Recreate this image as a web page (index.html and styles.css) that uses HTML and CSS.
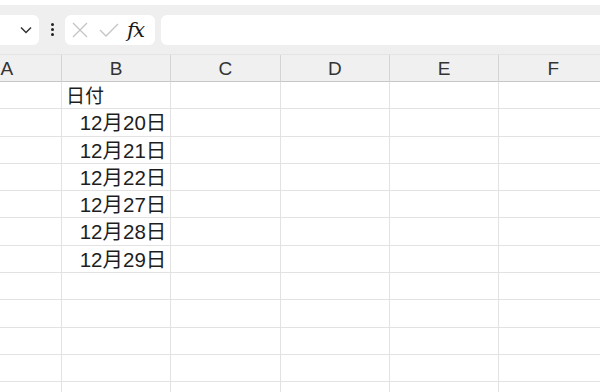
FILE: index.html
```html
<!DOCTYPE html>
<html lang="ja">
<head>
  <meta charset="UTF-8">
  <title>Sheet</title>
  <link rel="stylesheet" href="styles.css">
</head>
<body>

  <div class="toolbar">
    <div class="name-box">
      <svg class="chevron" width="12" height="8" viewBox="0 0 12 8"><path d="M1 1.5 L6 6.5 L11 1.5" fill="none" stroke="#333" stroke-width="1.5"/></svg>
    </div>
    <div class="dots"><span></span><span></span><span></span></div>
    <div class="fx-box">
      <svg width="16" height="16" viewBox="0 0 16 16"><path d="M1 1 L15 15 M15 1 L1 15" stroke="#c4c4c4" stroke-width="1.3" fill="none"/></svg>
      <svg width="20" height="16" viewBox="0 0 20 16"><path d="M1 8 L7 14 L19 2" stroke="#c4c4c4" stroke-width="1.3" fill="none"/></svg>
      <span class="fx">fx</span>
    </div>
    <div class="formula-bar"></div>
  </div>

  <div class="sheet">
    <div class="head">A</div>
    <div class="head">B</div>
    <div class="head">C</div>
    <div class="head">D</div>
    <div class="head">E</div>
    <div class="head">F</div>

    <div class="cell"></div><div class="cell">日付</div><div class="cell"></div><div class="cell"></div><div class="cell"></div><div class="cell"></div>
    <div class="cell"></div><div class="cell num">12月20日</div><div class="cell"></div><div class="cell"></div><div class="cell"></div><div class="cell"></div>
    <div class="cell"></div><div class="cell num">12月21日</div><div class="cell"></div><div class="cell"></div><div class="cell"></div><div class="cell"></div>
    <div class="cell"></div><div class="cell num">12月22日</div><div class="cell"></div><div class="cell"></div><div class="cell"></div><div class="cell"></div>
    <div class="cell"></div><div class="cell num">12月27日</div><div class="cell"></div><div class="cell"></div><div class="cell"></div><div class="cell"></div>
    <div class="cell"></div><div class="cell num">12月28日</div><div class="cell"></div><div class="cell"></div><div class="cell"></div><div class="cell"></div>
    <div class="cell"></div><div class="cell num">12月29日</div><div class="cell"></div><div class="cell"></div><div class="cell"></div><div class="cell"></div>
    <div class="cell"></div><div class="cell"></div><div class="cell"></div><div class="cell"></div><div class="cell"></div><div class="cell"></div>
    <div class="cell"></div><div class="cell"></div><div class="cell"></div><div class="cell"></div><div class="cell"></div><div class="cell"></div>
    <div class="cell"></div><div class="cell"></div><div class="cell"></div><div class="cell"></div><div class="cell"></div><div class="cell"></div>
    <div class="cell"></div><div class="cell"></div><div class="cell"></div><div class="cell"></div><div class="cell"></div><div class="cell"></div>
    <div class="cell"></div><div class="cell"></div><div class="cell"></div><div class="cell"></div><div class="cell"></div><div class="cell"></div>
  </div>

</body>
</html>
```

FILE: styles.css
```css
* { margin: 0; padding: 0; box-sizing: border-box; }
body {
  background: white;
  font-family: "Noto Sans CJK JP", "Noto Sans", sans-serif;
  color: #222;
  overflow: hidden;
  width: 600px;
  height: 392px;
}
.toolbar {
  margin-top: 5px;
  height: 50px;
  background: #efefef;
  display: flex;
  align-items: center;
  border-bottom: 1px solid #e4e4e4;
}
.name-box {
  margin-left: -20px;
  width: 59px;
  height: 30px;
  background: white;
  border-radius: 6px;
  display: flex;
  align-items: center;
  justify-content: flex-end;
  padding-right: 7px;
}
.dots {
  width: 26px;
  display: flex;
  flex-direction: column;
  align-items: center;
  gap: 2px;
}
.dots span {
  width: 3px;
  height: 3px;
  background: #222;
  border-radius: 50%;
}
.fx-box {
  width: 90px;
  height: 30px;
  background: white;
  border-radius: 6px;
  display: flex;
  align-items: center;
  padding-left: 7px;
  gap: 11px;
}
.fx {
  font-family: "DejaVu Serif", serif;
  font-style: italic;
  font-size: 21px;
  color: #1a1a1a;
  margin-left: -3px;
  letter-spacing: -1.5px;
}
.formula-bar {
  margin-left: 6px;
  flex: 1;
  height: 30px;
  background: white;
  border-radius: 6px 0 0 6px;
}
.sheet {
  display: grid;
  grid-template-columns: repeat(6, 109.3px);
  grid-template-rows: 27px;
  grid-auto-rows: 27.3px;
  margin-left: -47.3px;
}
.head {
  background: #f0f0f0;
  border-right: 1px solid #d4d4d4;
  border-bottom: 1px solid #c6c6c6;
  font-family: "Liberation Sans", "Noto Sans CJK JP", sans-serif;
  font-size: 19px;
  color: #333;
  display: flex;
  align-items: center;
  justify-content: center;
  padding-top: 1px;
}
.cell {
  border-right: 1px solid #e2e2e2;
  border-bottom: 1px solid #e2e2e2;
  font-size: 19px;
  line-height: 26px;
  padding-left: 4px;
  color: #1e1e1e;
}
.num {
  font-family: "Liberation Sans", "Noto Sans CJK JP", sans-serif;
  font-size: 20.5px;
  line-height: 28px;
  text-align: right;
  padding-right: 4px;
}
```
